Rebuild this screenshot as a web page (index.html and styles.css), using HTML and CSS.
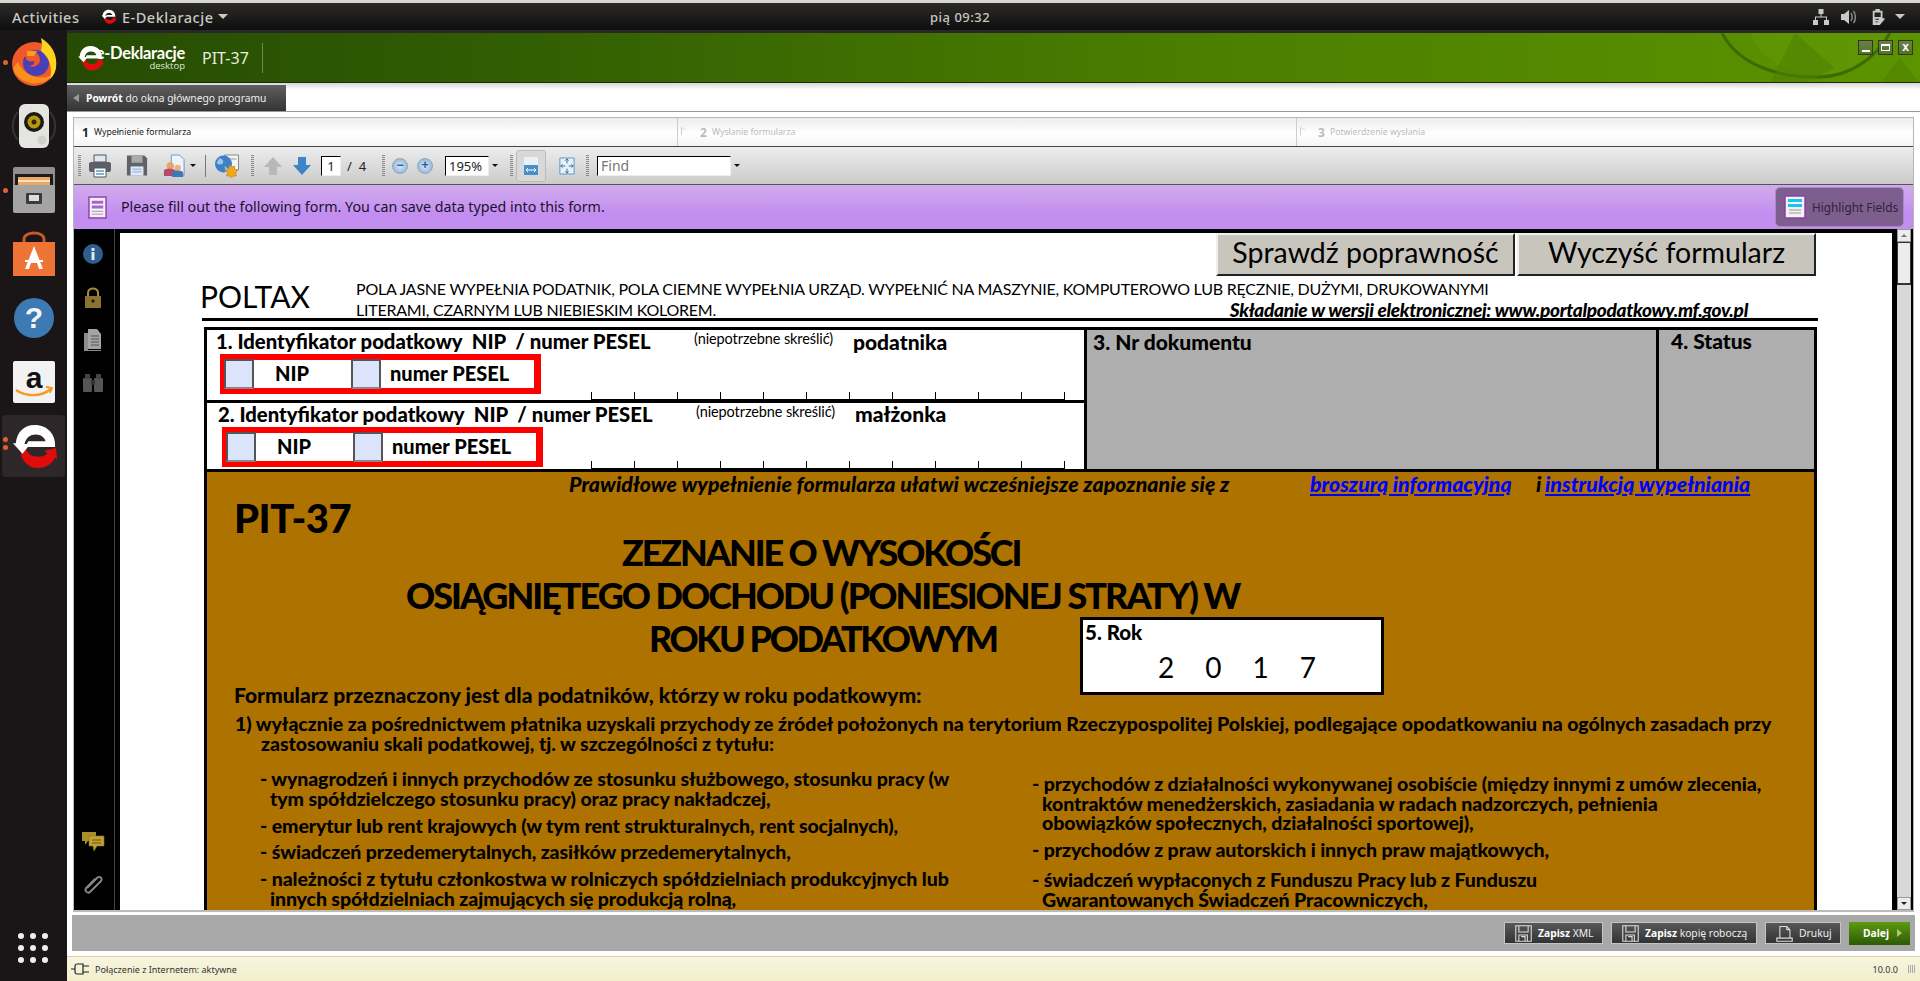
FILE: index.html
```html
<!DOCTYPE html>
<html lang="pl">
<head>
<meta charset="utf-8">
<title>E-Deklaracje</title>
<link rel="stylesheet" href="styles.css">
</head>
<body>
<svg class="defs" width="0" height="0" aria-hidden="true">
  <defs>
    <symbol id="elogo" viewBox="0 0 48 48">
      <path d="M10 31C12 42 20 47 28 47c8 0 15-4 18-11l2 2-1-12-12 3 3 3c-2 2-6 3-10 3-6 0-10-2-12-8z" fill="#e00b0b"/>
      <path d="M2 21l10 11 8-10h-6c2-7 6-10 12-10 5 0 9 3 10 7H18l-3 6h31C47 12 38 2 25 2 13 2 6 10 5 21z" fill="#fff"/>
    </symbol>
    <symbol id="floppy" viewBox="0 0 22 22">
      <path d="M1 1h20v20H1zM5 1v8h12V1M5 21v-8h11v8M8 15h5v6" fill="none" stroke="#ddd" stroke-width="1.4"/>
    </symbol>
    <symbol id="arrow" viewBox="0 0 20 20">
      <path d="M10 1 19 11h-5v8H6v-8H1z"/>
    </symbol>
  </defs>
</svg>

<div class="topstrip"></div>
<header class="topbar">
  <span class="activities">Activities</span>
  <svg class="tb-logo" viewBox="0 0 48 48"><use href="#elogo"/></svg>
  <span class="appname">E-Deklaracje</span>
  <span class="caret tb-caret"></span>
  <span class="clock">pią 09:32</span>
  <div class="tray">
    <svg class="tray-net" viewBox="0 0 16 16"><path d="M5.500 0h5v5h-2v2.500H14V11h2v5h-5v-5h2V8.500H3V11h2v5H0v-5h2V7.500h5.500V5h-2z" fill="#c9c9c9"/></svg>
    <svg class="tray-vol" viewBox="0 0 16 16"><path d="M0 5h3l5-4v14l-5-4H0z" fill="#c9c9c9"/><path d="M10 4c1.500 2 1.500 6 0 8M12.500 2c2.500 3 2.500 9 0 12" fill="none" stroke="#888" stroke-width="1.500"/></svg>
    <svg class="tray-bat" viewBox="0 0 15 18"><path d="M4 0h5v2h3v8l3 1-6 7H1V2h3z" fill="#c9c9c9"/><path d="M3 4h7v5H3zM4 11h4v1H4zM4 14h3v1H4z" fill="#222"/></svg>
    <span class="caret tray-caret"></span>
  </div>
</header>

<div class="desktop">
  <nav class="dock">
    <div class="dock-item"><span class="dots"><i></i></span>
      <svg class="dock-ic" viewBox="0 0 48 48">
        <circle cx="24" cy="26" r="22" fill="#f0592a"/>
        <path d="M3 30C7 46 32 52 44 36 36 42 16 42 8 24z" fill="#f9911b"/>
        <circle cx="26" cy="25" r="13" fill="#4a3fb5"/>
        <path d="M31 0c10 6 17 16 15 30-1 6-4 9-6 11 3-12-1-22-9-28 1-4 1-9 0-13z" fill="#ffd21f"/>
        <path d="M9 14c4-8 14-10 21-8-5 1-8 4-9 7 5 0 9 4 9 9s-6 8-11 6c4 0 6-3 5-5-5 2-9-2-8-4-3-1-6-1-7-5z" fill="#f2572b"/>
        <path d="M17 13h10l-3 5h-7z" fill="#f9a01b"/>
      </svg>
    </div>
    <div class="dock-item">
      <svg class="dock-ic" viewBox="0 0 48 48">
        <path d="M8 10C1 18 1 30 8 38M40 10c7 8 7 20 0 28" fill="none" stroke="#333" stroke-width="2"/>
        <rect x="9" y="2" width="30" height="44" rx="6" fill="#e4e4e0"/>
        <circle cx="24" cy="20" r="10" fill="#1c1a14"/>
        <circle cx="24" cy="20" r="6.500" fill="#b59a10"/>
        <circle cx="24" cy="20" r="2.500" fill="#2a2610"/>
        <circle cx="32" cy="38" r="4.500" fill="#d0d0cc"/>
      </svg>
    </div>
    <div class="dock-item"><span class="dots"><i></i></span>
      <svg class="dock-ic" viewBox="0 0 48 48">
        <rect x="3" y="1" width="42" height="44" rx="2" fill="#8f8f8f"/>
        <rect x="5" y="8" width="38" height="18" fill="#1e1a18"/>
        <rect x="8" y="11" width="32" height="10" fill="#e8a868"/>
        <rect x="8" y="14" width="32" height="2" fill="#fbe0b8"/>
        <rect x="3" y="19" width="42" height="28" rx="2" fill="#a4a4a4"/>
        <rect x="16" y="27" width="16" height="11" rx="1" fill="#3c3c3c"/>
        <rect x="19" y="29" width="10" height="6" fill="#ddd"/>
      </svg>
    </div>
    <div class="dock-item">
      <svg class="dock-ic" viewBox="0 0 48 48">
        <path d="M14 14v-5c0-8 20-8 20 0v5" fill="none" stroke="#c8582a" stroke-width="3"/>
        <rect x="3" y="12" width="42" height="34" fill="#ed7435"/>
        <path d="M24 16 33 39h-4l-2-6h-6l-2 6h-4zM15 30h18v2H15z" fill="#fff"/>
      </svg>
    </div>
    <div class="dock-item">
      <svg class="dock-ic" viewBox="0 0 48 48">
        <circle cx="24" cy="24" r="20" fill="#3d7ab3"/>
        <text class="help-q" x="24" y="34" text-anchor="middle">?</text>
      </svg>
    </div>
    <div class="dock-item">
      <svg class="dock-ic" viewBox="0 0 48 48">
        <rect x="3" y="3" width="42" height="42" rx="2" fill="#f2f2f2"/>
        <text class="amz-a" x="24" y="30" text-anchor="middle">a</text>
        <path d="M6 32c10 7 25 7 35-1" fill="none" stroke="#f39c1e" stroke-width="2.400"/>
        <path d="M36 29l6 1-2 5" fill="none" stroke="#f39c1e" stroke-width="1.800"/>
      </svg>
    </div>
    <div class="dock-item dock-active"><span class="dots"><i></i><i></i></span>
      <svg class="dock-ic dock-e" viewBox="0 0 48 48"><use href="#elogo"/></svg>
    </div>
    <div class="dock-grid"><i></i><i></i><i></i><i></i><i></i><i></i><i></i><i></i><i></i></div>
  </nav>

  <div class="win">
    <div class="winstrip"></div>
    <div class="hdr">
      <svg class="hdr-art" viewBox="0 0 220 50" preserveAspectRatio="none">
        <path d="M50 0C60 25 85 42 120 42c35 0 60-18 70-42z" fill="#6a9d08" opacity=".35"/>
        <path d="M22 0C40 35 85 45 120 44c30-1 55-18 70-44" fill="none" stroke="#3f6a00" stroke-width="3"/>
        <path d="M70 50 95 0l40 35-30 15zM180 50l20-25 20 25z" fill="#4e7f02" opacity=".55"/>
      </svg>
      <svg class="hdr-logo" viewBox="0 0 48 48"><use href="#elogo"/></svg>
      <div class="brand"><span class="brand-main">e-Deklaracje</span><span class="brand-sub">desktop</span></div>
      <span class="hdr-title">PIT-37</span>
      <span class="hdr-sep"></span>
      <div class="winbtns">
        <span class="winbtn"><i class="w-min"></i></span>
        <span class="winbtn"><i class="w-max"></i></span>
        <span class="winbtn w-x">x</span>
      </div>
    </div>
    <div class="retbar">
      <div class="rettab"><span class="tri-left"></span><span><b>Powrót</b> do okna głównego programu</span></div>
    </div>

    <div class="frame">
      <div class="steps">
        <div class="step step1"><b>1</b><span>Wypełnienie formularza</span></div>
        <div class="step step2"><span class="step-tri"></span><b>2</b><span>Wysłanie formularza</span></div>
        <div class="step step3"><span class="step-tri"></span><b>3</b><span>Potwierdzenie wysłania</span></div>
      </div>

      <div class="toolbar">
        <span class="grip g1"></span>
        <svg class="ti i-print" viewBox="0 0 24 24"><path d="M6 1h12v7H6z" fill="#dfe9f2" stroke="#555"/><rect x="1" y="8" width="22" height="10" rx="2" fill="#5c6066"/><path d="M6 14h12v9H6z" fill="#fff" stroke="#555"/><path d="M8 17h8M8 20h8" stroke="#5a9bd0" stroke-width="1.500"/></svg>
        <svg class="ti i-save" viewBox="0 0 24 24"><path d="M1 1h19l3 3v19H1z" fill="#5f6268"/><rect x="6" y="1" width="12" height="8" fill="#aaa"/><rect x="5" y="13" width="14" height="10" fill="#dfe9f5"/><path d="M7 16h10M7 19h10" stroke="#7fa8d0"/></svg>
        <svg class="ti i-share" viewBox="0 0 24 24"><path d="M9 0h9l5 5v17H9z" fill="#eef3fa" stroke="#6f93bb"/><circle cx="8" cy="12" r="4" fill="#e7a36a"/><path d="M1 23v-5c0-3 3-3 7-3s6 1 6 3v5z" fill="#b54a6a"/><circle cx="16" cy="14" r="3.500" fill="#e7b27c"/><path d="M10 24v-4c0-2 2-3 6-3s6 1 6 3v4z" fill="#3d7ab3"/></svg>
        <span class="tcaret c1"></span>
        <span class="tsep"></span>
        <svg class="ti i-globe" viewBox="0 0 26 24"><path d="M10 1h14v15H10z" fill="#f4f4f4" stroke="#888"/><path d="M12 5h10" stroke="#999"/><circle cx="9" cy="10" r="8.500" fill="#3e80c4"/><path d="M5 4c3 1 5 3 3 6-3 1-5 0-6-1M10 12l4 3-3 3z" fill="#9ec6e8"/><path d="M15 11l2 2 3-1 0 3 3 1-2 3 1 3-3 0-2 2-2-2-3 0 1-3-2-3 3-1z" fill="#f0a81e" stroke="#c07a10" stroke-width=".6"/></svg>
        <span class="grip g2"></span>
        <svg class="ti i-up" viewBox="0 0 20 20"><use href="#arrow"/></svg>
        <svg class="ti i-down" viewBox="0 0 20 20"><use href="#arrow"/></svg>
        <span class="pbox">1</span>
        <span class="pcount"><span class="slash">/</span><span>4</span></span>
        <span class="grip g3"></span>
        <span class="zoombtn">−</span>
        <span class="zoombtn z2">+</span>
        <span class="zbox">195%</span>
        <span class="tcaret c2"></span>
        <span class="grip g4"></span>
        <span class="fitbtn"><svg class="ti i-fit" viewBox="0 0 16 20"><path d="M1 1h14v18H1z" fill="#e8f0f8"/><path d="M1 9h14v10H1z" fill="#4a90c8"/><path d="M3 14h10M5 12l-2 2 2 2M11 12l2 2-2 2" stroke="#fff" fill="none"/></svg></span>
        <svg class="ti i-full" viewBox="0 0 18 20"><path d="M1 1h16v18H1z" fill="#e8f0f8" stroke="#4a90c8"/><path d="M9 2v5M7 4l2-2 2 2M9 18v-5M7 16l2 2 2-2M2 10h5M4 8l-2 2 2 2M16 10h-5M14 8l2 2-2 2" stroke="#1f5f94" fill="none"/></svg>
        <span class="grip g5"></span>
        <span class="find">Find</span>
        <span class="tcaret c3"></span>
      </div>

      <div class="infobar">
        <svg class="info-ic" viewBox="0 0 20 24"><rect x="1" y="1" width="18" height="22" fill="#f4f0fa" stroke="#8c3fa8" stroke-width="1.500"/><path d="M4 5h12v3H4zM4 10h12v3H4z" fill="#a666c8"/><path d="M4 16h12M4 19h12" stroke="#9a9a9a"/></svg>
        <span class="info-text">Please fill out the following form. You can save data typed into this form.</span>
        <div class="highlight">
          <svg class="hl-ic" viewBox="0 0 22 24"><rect x="1" y="1" width="20" height="22" fill="#f2f2f2" stroke="#8c3fa8" stroke-width="1.500"/><path d="M4 4h14v3H4zM4 9h14v3H4z" fill="#19c3f5"/><path d="M5 15h12M5 18h12" stroke="#999"/></svg>
          <span>Highlight Fields</span>
        </div>
      </div>

      <div class="viewer">
        <aside class="rail">
          <svg class="ri" viewBox="0 0 22 22"><circle cx="11" cy="11" r="10" fill="#2e5f8e"/><rect x="9.500" y="9" width="3" height="8" fill="#dce8f2"/><rect x="9.500" y="5" width="3" height="3" fill="#dce8f2"/></svg>
          <svg class="ri" viewBox="0 0 22 22"><path d="M6 10V7c0-6 10-6 10 0v3" fill="none" stroke="#a88a3e" stroke-width="2"/><rect x="3" y="10" width="16" height="12" fill="#8c7230"/><circle cx="11" cy="15" r="1.600" fill="#111"/></svg>
          <svg class="ri" viewBox="0 0 22 22"><path d="M2 4h4v17h13v1H2z" fill="#8e8e8e"/><path d="M6 0h9l4 5v15H6z" fill="#a4a4a4"/><path d="M9 7h8M9 10h8M9 13h8M9 16h8" stroke="#555"/></svg>
          <svg class="ri" viewBox="0 0 22 22"><rect x="1" y="6" width="9" height="14" rx="1" fill="#555"/><rect x="12" y="6" width="9" height="14" rx="1" fill="#555"/><rect x="3" y="2" width="5" height="5" fill="#444"/><rect x="14" y="2" width="5" height="5" fill="#444"/><rect x="9" y="8" width="4" height="5" fill="#333"/></svg>
          <svg class="ri ri-chat" viewBox="0 0 24 22"><path d="M1 1h14v9H7l-3 4v-4H1z" fill="#a88f2a"/><path d="M8 5h15v10h-7l-3 5-1-5H8z" fill="#c2a032" stroke="#8c7420" stroke-width=".6"/><path d="M11 9h9M11 12h9" stroke="#6a5610"/></svg>
          <svg class="ri ri-clip" viewBox="0 0 22 22"><path d="M5 14 15 4c3-3 6 1 4 3L8 18c-2 2-6-1-4-4L13 5" fill="none" stroke="#8a8a8a" stroke-width="1.800"/></svg>
        </aside>

        <main class="page">
          <div class="form">
            <div class="formbtns">
              <button class="fbtn" type="button">Sprawdź poprawność</button>
              <button class="fbtn" type="button">Wyczyść formularz</button>
            </div>
            <div class="formhead">
              <span class="poltax">POLTAX</span>
              <div class="headtext">
                <div>POLA JASNE WYPEŁNIA PODATNIK, POLA CIEMNE WYPEŁNIA URZĄD. WYPEŁNIĆ NA MASZYNIE, KOMPUTEROWO LUB RĘCZNIE, DUŻYMI, DRUKOWANYMI</div>
                <div class="headline2"><span>LITERAMI, CZARNYM LUB NIEBIESKIM KOLOREM.</span><b><i>Składanie w wersji elektronicznej: www.portalpodatkowy.mf.gov.pl</i></b></div>
              </div>
            </div>

            <div class="idgrid">
              <div class="idleft">
                <section class="idrow idrow1">
                  <div class="idtitle"><b class="t-main">1. Identyfikator podatkowy&nbsp; NIP&nbsp; / numer PESEL</b><span class="t-note">(niepotrzebne skreślić)</span><b class="t-who">podatnika</b></div>
                  <div class="idfields">
                    <div class="redbox"><span class="chk"></span><b class="nip">NIP</b><span class="chk"></span><b class="pesel">numer PESEL</b></div>
                    <div class="ticks"></div>
                  </div>
                </section>
                <section class="idrow idrow2">
                  <div class="idtitle"><b class="t-main">2. Identyfikator podatkowy&nbsp; NIP&nbsp; / numer PESEL</b><span class="t-note">(niepotrzebne skreślić)</span><b class="t-who">małżonka</b></div>
                  <div class="idfields">
                    <div class="redbox"><span class="chk"></span><b class="nip">NIP</b><span class="chk"></span><b class="pesel">numer PESEL</b></div>
                    <div class="ticks"></div>
                  </div>
                </section>
              </div>
              <div class="idgray cell-nr"><b>3. Nr dokumentu</b></div>
              <div class="idgray cell-status"><b>4. Status</b></div>
            </div>

            <section class="brown">
              <p class="note"><b><i class="note-a">Prawidłowe wypełnienie formularza ułatwi wcześniejsze zapoznanie się z</i><a class="link l1" href="#">broszurą informacyjną</a><i class="note-i">i</i><a class="link l2" href="#">instrukcją wypełniania</a></b></p>
              <h1 class="pit">PIT-37</h1>
              <h2 class="title t1">ZEZNANIE O WYSOKOŚCI</h2>
              <h2 class="title t2">OSIĄGNIĘTEGO DOCHODU (PONIESIONEJ STRATY) W</h2>
              <div class="yearrow">
                <div>
                  <h2 class="title t3">ROKU PODATKOWYM</h2>
                  <p class="intro">Formularz przeznaczony jest dla podatników, którzy w roku podatkowym:</p>
                </div>
                <div class="rok"><b>5. Rok</b><div class="rokval"><span>2</span><span>0</span><span>1</span><span>7</span></div></div>
              </div>
              <p class="cond">1) wyłącznie za pośrednictwem płatnika uzyskali przychody ze źródeł położonych na terytorium Rzeczypospolitej Polskiej, podlegające opodatkowaniu na ogólnych zasadach przy<br><span class="cond2">zastosowaniu skali podatkowej, tj. w szczególności z tytułu:</span></p>
              <div class="lists">
                <ul class="list ll">
                  <li>- wynagrodzeń i innych przychodów ze stosunku służbowego, stosunku pracy (w<br>tym spółdzielczego stosunku pracy) oraz pracy nakładczej,</li>
                  <li>- emerytur lub rent krajowych (w tym rent strukturalnych, rent socjalnych),</li>
                  <li>- świadczeń przedemerytalnych, zasiłków przedemerytalnych,</li>
                  <li>- należności z tytułu członkostwa w rolniczych spółdzielniach produkcyjnych lub<br>innych spółdzielniach zajmujących się produkcją rolną,</li>
                </ul>
                <ul class="list lr">
                  <li>- przychodów z działalności wykonywanej osobiście (między innymi z umów zlecenia,<br>kontraktów menedżerskich, zasiadania w radach nadzorczych, pełnienia<br>obowiązków społecznych, działalności sportowej),</li>
                  <li>- przychodów z praw autorskich i innych praw majątkowych,</li>
                  <li>- świadczeń wypłaconych z Funduszu Pracy lub z Funduszu<br>Gwarantowanych Świadczeń Pracowniczych,</li>
                </ul>
              </div>
            </section>
          </div>
        </main>

        <div class="scroll">
          <span class="sb-up"></span>
          <span class="sb-thumb"></span>
          <span class="sb-track"></span>
          <span class="sb-down"></span>
        </div>
      </div>
    </div>

    <div class="actions">
      <button class="abtn a1" type="button"><svg class="a-ic" viewBox="0 0 22 22"><use href="#floppy"/></svg><span><b>Zapisz</b> XML</span></button>
      <button class="abtn a2" type="button"><svg class="a-ic" viewBox="0 0 22 22"><use href="#floppy"/></svg><span><b>Zapisz</b> kopię roboczą</span></button>
      <button class="abtn a3" type="button"><svg class="a-ic" viewBox="0 0 22 22"><path d="M5 2h9l4 4v11H5zM14 2v4h4M1 17h20v4H1z" fill="none" stroke="#ddd" stroke-width="1.400"/></svg><span>Drukuj</span></button>
      <button class="abtn next" type="button"><b>Dalej</b><span class="tri-right"></span></button>
    </div>
    <footer class="statusbar">
      <svg class="plug" viewBox="0 0 20 12"><path d="M0 6h4M4 3c0-1 1-2 2-2h6v10H6c-1 0-2-1-2-2zM12 3h6M12 9h6" fill="none" stroke="#222" stroke-width="1.200"/></svg>
      <span>Połączenie z Internetem: aktywne</span>
      <span class="ver">10.0.0</span>
      <span class="sgrip"></span>
    </footer>
  </div>
</div>
</body>
</html>
```

FILE: styles.css
```css
* { box-sizing: border-box; }
html, body { margin: 0; padding: 0; }
body {
  width: 1920px; height: 981px; overflow: hidden;
  display: flex; flex-direction: column;
  font-family: "Noto Sans", sans-serif; background: #fff;
}
.defs { position: absolute; }
p, h1, h2, ul { margin: 0; padding: 0; }
li { list-style: none; }
button { font-family: inherit; padding: 0; cursor: default; }

/* GNOME top bar */
.topstrip { height: 3px; background: #d9d8d4; }
.topbar {
  height: 27px; display: flex; align-items: center;
  background: linear-gradient(#2c2b28, #0e0e0e);
  color: #c8c8c4; font-size: 14.500px; letter-spacing: .5px; font-weight: 500;
  position: relative;
}
.activities { margin-left: 12px; width: 89px; }
.tb-logo { width: 15px; height: 15px; margin-right: 6px; }
.appname { width: 96px; white-space: nowrap; }
.caret { width: 0; height: 0; border: 5px solid transparent; border-top: 5px solid #c8c8c4; border-bottom: 0; }
.clock { position: absolute; left: 930px; font-size: 13px; }
.tray { margin-left: auto; display: flex; align-items: center; margin-right: 15px; }
.tray svg { height: 16px; display: block; }
.tray-net { width: 16px; margin-right: 12px; }
.tray-vol { width: 16px; margin-right: 14px; }
.tray-bat { width: 15px; margin-right: 9px; }

.desktop { flex: 1; display: flex; min-height: 0; }

/* Dock */
.dock { width: 67px; background: #1a1517; display: flex; flex-direction: column; position: relative; }
.dock-item { height: 64px; display: flex; align-items: center; justify-content: center; position: relative; flex: none; }
.dock-ic { width: 48px; height: 48px; }
.dock-e { width: 46px; height: 46px; }
.dock-active { height: 62px; margin: 1px 2px; background: #2e2729; border-radius: 4px; }
.dots { position: absolute; left: 3px; top: 0; bottom: 0; display: flex; flex-direction: column; justify-content: center; gap: 3px; }
.dock-active .dots { left: 1px; margin-top: -6px; }
.dots i { width: 5px; height: 5px; border-radius: 50%; background: #e0622c; }
.dock-grid { margin-top: auto; margin-bottom: 18px; margin-left: 18px; display: grid; grid-template-columns: repeat(3, 6px); gap: 6px; }
.dock-grid i { width: 6px; height: 6px; border-radius: 50%; background: #eee; }
.help-q { font: 700 30px "Liberation Sans", sans-serif; fill: #f2f6fa; }
.amz-a { font: 700 30px "Liberation Sans", sans-serif; fill: #111; }

/* Window */
.win { flex: 1; min-width: 0; display: flex; flex-direction: column; background: #fff; }
.winstrip { height: 3px; background: #282828; }
.hdr {
  height: 50px; display: flex; align-items: center; position: relative; overflow: hidden;
  background: linear-gradient(to right, #264b03 0, #2f5a03 20%, #4b7d00 60%, #5c9400 100%);
  border-bottom: 1px solid #1c2c06;
}
.hdr-art { position: absolute; right: 0; top: 0; width: 220px; height: 50px; }
.hdr-logo { width: 26px; height: 26px; margin-left: 10px; flex: none; }
.brand { display: flex; flex-direction: column; align-items: flex-end; margin-left: 2px; width: 80px; color: #fff; line-height: 1; }
.brand-main { font: 700 16.500px/15px Lato, sans-serif; letter-spacing: -.3px; white-space: nowrap; }
.brand-sub { font: 400 9.500px/9px "Open Sans", sans-serif; color: #dfe8d0; }
.hdr-title { margin-left: 17px; width: 60px; font-size: 16px; color: #e6eede; position: relative; }
.hdr-sep { width: 1px; height: 30px; background: #6b8f3c; }
.winbtns { margin-left: auto; margin-right: 7px; display: flex; gap: 5px; margin-top: -21px; position: relative; }
.winbtn {
  width: 15px; height: 15px; border: 1px solid #2e3a1a; position: relative;
  background: linear-gradient(#6c7f4b, #55722a); color: #fff;
  display: flex; align-items: center; justify-content: center;
}
.w-min { width: 8px; height: 2px; background: #fff; align-self: flex-end; margin-bottom: 2px; }
.w-max { width: 9px; height: 7px; border: 1px solid #fff; border-top-width: 2px; }
.w-x { font: 700 12px/1 "Liberation Sans", sans-serif; }

.retbar { height: 29px; border-bottom: 1px solid #999; padding-top: 2px; background: linear-gradient(#d6d6d6, #fff 7px); }
.rettab {
  width: 219px; height: 26px; display: flex; align-items: center; color: #eee; font-size: 10.300px;
  background: linear-gradient(#5f5f5f, #343434); white-space: nowrap;
}
.rettab b { color: #fff; }
.tri-left { width: 0; height: 0; border: 4px solid transparent; border-right: 6px solid #999; border-left: 0; margin: 0 7px 0 6px; }

/* Frame */
.frame { margin: 5px 6px 0 6px; height: 795px; border: 1px solid #b6b6b6; border-bottom: 2px solid #bbb; display: flex; flex-direction: column; flex: none; }
.steps { height: 29px; display: flex; background: linear-gradient(#ececec, #fff 55%, #f4f4f4); border-bottom: 1px solid #444; flex: none; }
.step { display: flex; align-items: center; gap: 5px; font-size: 8.700px; position: relative; }
.step b { font-size: 12px; }
.step1 { width: 603px; padding-left: 8px; color: #222; }
.step2 { width: 619px; padding-left: 22px; color: #bbb; border-left: 1px solid #ccc; }
.step3 { flex: 1; padding-left: 21px; color: #bbb; border-left: 1px solid #ccc; }
.step-tri { position: absolute; left: 3px; top: 10px; width: 5px; height: 8px; border-left: 1px solid #ccc; border-top: 1px solid #ddd; transform: skewY(25deg); }

.toolbar { height: 38px; display: flex; align-items: center; background: linear-gradient(#ededed, #cbcbcb); border-bottom: 1px solid #555; flex: none; position: relative; }
.grip { width: 3px; height: 22px; background: repeating-linear-gradient(#888 0 1px, transparent 1px 2px); }
.ti { display: block; flex: none; }
.g1 { margin-left: 4px; }
.i-print { width: 24px; height: 24px; margin-left: 7px; }
.i-save { width: 22px; height: 23px; margin-left: 14px; }
.i-share { width: 22px; height: 24px; margin-left: 15px; }
.tcaret { width: 0; height: 0; border: 3px solid transparent; border-top: 3px solid #111; border-bottom: 0; }
.c1 { margin-left: 5px; }
.tsep { width: 1px; height: 22px; background: #777; margin-left: 9px; }
.i-globe { width: 27px; height: 24px; margin-left: 8px; }
.g2 { margin-left: 10px; }
.i-up { width: 20px; height: 20px; margin-left: 9px; fill: #b8b8b8; }
.i-down { width: 20px; height: 20px; margin-left: 9px; fill: #3d85c6; transform: rotate(180deg); }
.pbox { width: 20px; height: 20px; margin-left: 9px; background: #fff; border: 1px solid #000; border-right-color: #eee; border-bottom-color: #eee; font-size: 13px; line-height: 18px; text-align: center; color: #222; }
.pcount { margin-left: 6px; font-size: 13px; color: #222; display: flex; gap: 7px; width: 24px; }
.g3 { margin-left: 11px; }
.zoombtn { width: 16px; height: 16px; border-radius: 50%; margin-left: 7px; background: radial-gradient(#dbe9f5, #7fa9cd); border: 1px solid #8fa8bd; color: #1e5b8e; font: 700 12px/13px "Liberation Sans", sans-serif; text-align: center; }
.z2 { margin-left: 9px; }
.zbox { width: 44px; height: 20px; margin-left: 12px; background: #fff; border: 1px solid #000; border-right-color: #eee; border-bottom-color: #eee; font-size: 13px; line-height: 18px; padding-left: 3px; color: #222; }
.c2 { margin-left: 3px; }
.g4 { margin-left: 12px; }
.fitbtn { width: 30px; height: 32px; margin-left: 3px; background: #d8d8d8; border: 1px solid #bbb; border-radius: 3px; display: flex; align-items: center; justify-content: center; }
.i-fit { width: 16px; height: 20px; }
.i-full { width: 16px; height: 20px; margin-left: 13px; }
.g5 { margin-left: 11px; }
.find { width: 134px; height: 20px; margin-left: 8px; background: #fff; border: 1px solid #000; border-right-color: #eee; border-bottom-color: #eee; font-size: 14px; line-height: 18px; padding-left: 3px; color: #777; }
.c3 { margin-left: 3px; }

.infobar { height: 44px; display: flex; align-items: center; background: linear-gradient(#d1abec, #c28cf0 70%, #c290ee); flex: none; color: #1c1030; }
.info-ic { width: 19px; height: 23px; margin-left: 14px; }
.info-text { margin-left: 14px; font-size: 14.250px; white-space: nowrap; margin-top: -2px; }
.highlight {
  margin-left: auto; margin-right: 9px; width: 129px; height: 40px; display: flex; align-items: center; gap: 6px; padding-left: 8px;
  background: #7d5e8e; border: 1px solid #a68bc0; border-radius: 5px; font-size: 11.800px; color: #2f2338; white-space: nowrap;
}
.hl-ic { width: 22px; height: 24px; flex: none; }

/* Viewer */
.viewer { height: 681px; display: flex; background: #000; flex: none; overflow: hidden; }
.rail { width: 41px; border-right: 1px solid #444; margin-right: 5px; flex: none; display: flex; flex-direction: column; align-items: center; padding: 14px 2px 14px 0; gap: 21px; }
.ri { width: 22px; height: 22px; flex: none; }
.ri-chat { margin-top: auto; width: 24px; }
.page { width: 1772px; margin-top: 4px; background: #fff; overflow: hidden; flex: none; }
.scroll { width: 14px; margin-left: 5px; flex: none; display: flex; flex-direction: column; background: #ddd; }
.sb-up, .sb-down { height: 13px; background: #ececec; border: 1px solid #999; flex: none; display: flex; align-items: center; justify-content: center; }
.sb-up::after { content: ""; border: 3px solid transparent; border-bottom: 3px solid #777; border-top: 0; }
.sb-down::after { content: ""; border: 3px solid transparent; border-top: 3px solid #222; border-bottom: 0; }
.sb-thumb { height: 43px; background: #ececec; border: 1px solid #333; border-width: 1px 1px 2px 1px; flex: none; }
.sb-track { flex: 1; background: #d8d8d8; }

/* PDF form */
.form { margin-left: 82px; width: 1616px; color: #000; font-family: Lato, sans-serif; }
.form b, .form h1, .form h2 { font-weight: 900; }
.formbtns { height: 42px; display: flex; justify-content: flex-end; gap: 2px; padding-right: 2px; }
.fbtn {
  width: 299px; height: 43px; background: #c8c5bd; font-family: Lato, sans-serif; font-size: 28.500px; color: #000;
  border: 2px solid; border-color: #eee #222 #222 #eee; padding-bottom: 5px;
}
.formhead { height: 46px; display: flex; border-bottom: 3px solid #000; }
.poltax { width: 156px; margin-left: -2px; padding-top: 4px; font-size: 30px; line-height: 34px; flex: none; }
.headtext { width: 1392px; font-size: 16px; line-height: 21px; padding-top: 3px; letter-spacing: -.23px; white-space: nowrap; }
.headline2 { display: flex; justify-content: space-between; }
.headline2 b { font-size: 19px; letter-spacing: -.3px; }
.idgrid {
  margin: 6px 0 0 2px; width: 1613px; height: 145px; border: 3px solid #000; display: grid;
  grid-template-columns: 877px 572px 158px; font-size: 20.300px;
}
.idleft { display: flex; flex-direction: column; }
.idrow1 { height: 73px; border-bottom: 3px solid #000; }
.idrow2 { height: 66px; }
.idtitle { height: 24px; line-height: 23px; display: flex; white-space: nowrap; }
.idrow1 .idtitle { padding-left: 9px; }
.idrow2 .idtitle { padding-left: 11px; line-height: 22px; }
.t-main { width: 478px; }
.t-note { width: 159px; font-size: 14.500px; line-height: 17px; letter-spacing: -.1px; }
.t-who { font-size: 21px; }
.idfields { height: 46px; display: flex; align-items: flex-start; }
.idrow2 .idfields { height: 42px; }
.redbox { width: 321px; height: 40px; margin-left: 13px; border: 6px solid #f00; border-left-width: 4px; border-right-width: 7px; display: flex; align-items: center; font-size: 20px; line-height: 24px; }
.idrow2 .redbox { margin-left: 15px; }
.chk { width: 30px; height: 30px; margin: -1px 0; flex: none; background: #dce4fb; border: 2px solid; border-color: #555 #555 #888 #555; }
.nip { width: 97px; padding-left: 21px; margin-top: -3px; }
.pesel { margin-left: 9px; white-space: nowrap; margin-top: -3px; }
.ticks {
  margin-left: auto; margin-right: 19px; align-self: flex-end; width: 474px; height: 8px;
  border-bottom: 1px solid #000;
  background: repeating-linear-gradient(to right, #000 0 1px, transparent 1px 43px);
}
.idgray { background: #aeaeae; border-left: 3px solid #000; font-size: 21px; }
.cell-nr { padding: 0 0 0 6px; line-height: 24px; }
.cell-status { padding: 0 0 0 12px; line-height: 22px; }

.brown { margin-left: 2px; width: 1613px; height: 440px; background: #ad7200; border: 3px solid #000; border-width: 0 3px; overflow: hidden; font-size: 19.500px; }
.brown p, .brown li { font-weight: 900; white-space: nowrap; }
.note { height: 24px; line-height: 24px; padding-left: 362px; font-size: 21.300px; display: flex; }
.note b { display: flex; }
.note-a { width: 741px; letter-spacing: .05px; }
.note-i { width: 9px; margin-left: 21px; }
.link { color: #00f; font-style: italic; text-decoration: underline; }
.l1 { width: 205px; }
.pit { height: 35px; padding-left: 27px; font-size: 40px; line-height: 44px; letter-spacing: -.5px; }
.title { height: 43px; font-size: 36px; line-height: 43px; white-space: nowrap; letter-spacing: -2px; }
.t1 { padding-left: 415px; letter-spacing: -2.100px; }
.t2 { padding-left: 199px; }
.t3 { padding-left: 442px; letter-spacing: -2.400px; }
.yearrow { height: 97px; display: grid; grid-template-columns: 873px 304px; }
.intro { font-size: 21px; line-height: 22px; margin-top: 24px; padding-left: 27px; }
.rok { height: 78px; border: 3px solid #000; background: #fff; font-size: 20.500px; line-height: 24px; padding-left: 2px; }
.rokval { display: flex; font-size: 28px; font-weight: 400; line-height: 34px; margin-top: 6px; padding-left: 73px; gap: 31px; }
.cond { line-height: 20px; margin-top: 0; padding-left: 28px; letter-spacing: -.05px; }
.cond2 { padding-left: 26px; }
.lists { display: grid; grid-template-columns: 825px 1fr; }
.list li { text-indent: -10px; letter-spacing: -.1px; }
.ll { margin-top: 15px; padding-left: 63px; }
.ll li { line-height: 20px; }
.ll li:nth-child(2) { margin-top: 7px; }
.ll li:nth-child(3) { margin-top: 6px; }
.ll li:nth-child(4) { margin-top: 7px; }
.lr { margin-top: 20px; padding-left: 10px; }
.lr li { line-height: 19.500px; }
.lr li:nth-child(2) { margin-top: 7px; }
.lr li:nth-child(3) { margin-top: 11px; }

/* Actions */
.actions { height: 36px; margin: 3px 5px 0 5px; background: #a8a8a8; display: flex; justify-content: flex-end; align-items: center; gap: 8px; padding-right: 5px; flex: none; }
.abtn { height: 22px; display: flex; align-items: center; gap: 6px; color: #eee; font-size: 10.300px; background: linear-gradient(#585858, #333); border: 1px solid #c4c4c4; padding: 0 0 0 10px; white-space: nowrap; }
.abtn b { color: #fff; }
.a-ic { width: 17px; height: 17px; flex: none; }
.a1 { width: 99px; }
.a2 { width: 146px; }
.a3 { width: 76px; }
.next { width: 61px; height: 23px; border: 0; background: linear-gradient(#5e9a10, #2c5a06); padding-left: 14px; color: #fff; }
.tri-right { width: 0; height: 0; border: 4px solid transparent; border-left: 5px solid #a9c77c; border-right: 0; margin-left: 2px; }

.statusbar { height: 25px; margin-top: 5px; border-top: 1px solid #d8d4a0; background: linear-gradient(#f8f5e0, #f2eecc); display: flex; align-items: center; font-size: 9px; color: #333; flex: none; }
.plug { width: 20px; height: 12px; margin: 0 4px 0 4px; }
.ver { margin-left: auto; margin-right: 10px; font-size: 9px; }
.sgrip { width: 8px; height: 8px; margin-right: 4px; background: repeating-linear-gradient(to right, #aaa 0 1px, transparent 1px 2px); }
```
